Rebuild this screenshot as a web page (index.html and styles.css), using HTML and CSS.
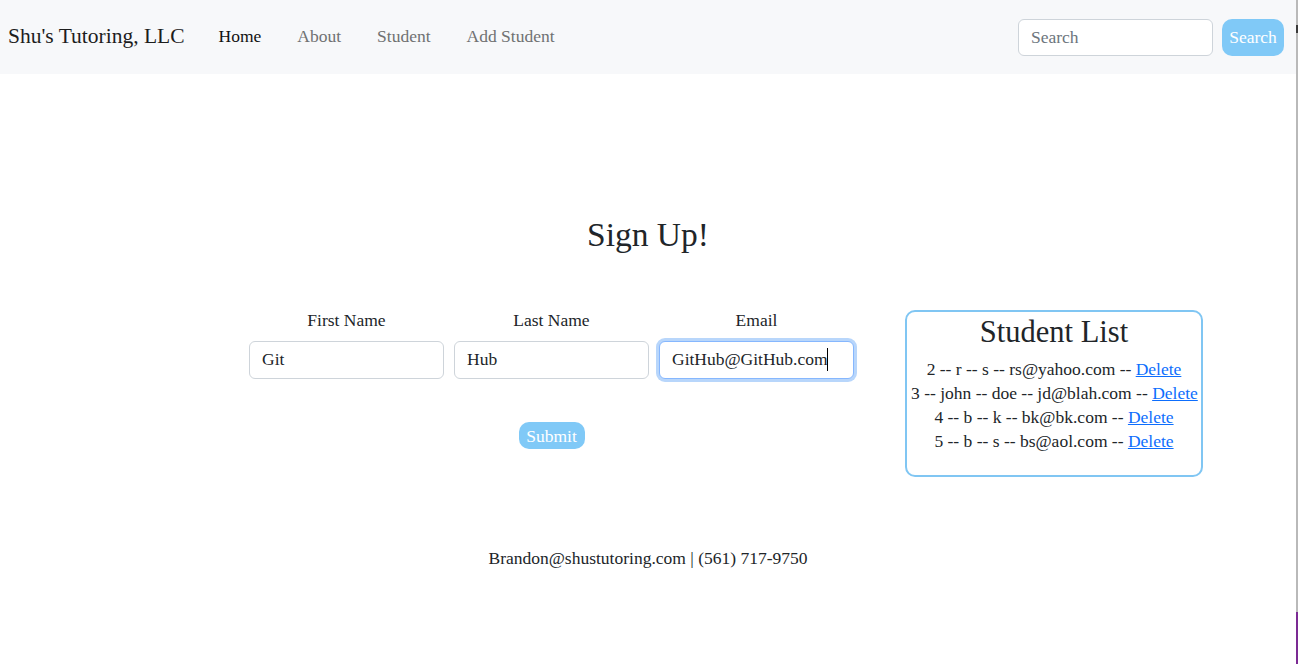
FILE: index.html
```html
<!DOCTYPE html>
<html lang="en">
<head>
<meta charset="utf-8">
<title>Shu's Tutoring, LLC</title>
<link rel="stylesheet" href="styles.css">
</head>
<body>
<div class="page">
  <nav class="navbar">
    <span class="brand">Shu's Tutoring, LLC</span>
    <ul class="nav-links">
      <li><a class="nav-link active" href="#">Home</a></li>
      <li><a class="nav-link" href="#">About</a></li>
      <li><a class="nav-link" href="#">Student</a></li>
      <li><a class="nav-link" href="#">Add Student</a></li>
    </ul>
    <form class="search">
      <input class="search-input" type="text" placeholder="Search">
      <button class="btn" type="button">Search</button>
    </form>
  </nav>

  <main class="main">
    <h1 class="title">Sign Up!</h1>
    <div class="content">
      <form class="signup">
        <div class="fields">
          <div class="field">
            <label class="label">First Name</label>
            <input class="input" type="text" value="Git">
          </div>
          <div class="field">
            <label class="label">Last Name</label>
            <input class="input" type="text" value="Hub">
          </div>
          <div class="field">
            <label class="label">Email</label>
            <div class="input-wrap">
              <input class="input focused" type="text" value="GitHub@GitHub.com">
              <span class="caret"></span>
            </div>
          </div>
        </div>
        <button class="btn submit" type="button">Submit</button>
      </form>

      <section class="list">
        <h2 class="list-title">Student List</h2>
        <p class="row">2 -- r -- s -- rs@yahoo.com -- <a href="#">Delete</a></p>
        <p class="row">3 -- john -- doe -- jd@blah.com -- <a href="#">Delete</a></p>
        <p class="row">4 -- b -- k -- bk@bk.com -- <a href="#">Delete</a></p>
        <p class="row">5 -- b -- s -- bs@aol.com -- <a href="#">Delete</a></p>
      </section>
    </div>
    <footer class="footer">Brandon@shustutoring.com | (561) 717-9750</footer>
  </main>
</div>
<div class="edge"><span class="edge-dark"></span><span class="edge-purple"></span></div>
</body>
</html>
```

FILE: styles.css
```css
* { box-sizing: border-box; }

html, body { margin: 0; padding: 0; background: #fff; }

body {
  display: flex;
  height: 664px;
  overflow: hidden;
  font-family: "Liberation Serif", "Times New Roman", serif;
  font-size: 17.5px;
  line-height: 24px;
  color: #212529;
}

.page { width: 1296px; flex: none; }

.edge {
  width: 2px;
  flex: none;
  background: #b9b9b9;
  display: flex;
  flex-direction: column;
  justify-content: space-between;
}
.edge-dark { display: block; height: 8px; margin-top: 25px; background: #3a3a3a; }
.edge-purple { display: block; height: 52px; background: #7b2a93; }

/* Navbar */
.navbar {
  height: 74px;
  background: #f7f8fa;
  display: flex;
  align-items: center;
  padding: 0 12px 2px 8px;
}
.brand {
  font-size: 21.5px;
  color: #1d1d1d;
  margin-right: 16px;
  line-height: 30px;
}
.nav-links {
  list-style: none;
  display: flex;
  margin: 0;
  padding: 0;
}
.nav-link {
  display: block;
  padding: 0 18px;
  text-decoration: none;
  color: #707172;
}
.nav-link.active { color: #111; }

.search {
  margin-left: auto;
  display: flex;
  gap: 9px;
  align-items: center;
  margin-top: 2px;
}
.search-input {
  width: 195px;
  height: 37px;
  border: 1px solid #ced4da;
  border-radius: 6px;
  padding: 0 12px;
  font: inherit;
  color: #212529;
  background: #fff;
}
.search-input::placeholder { color: #6c757d; }

.btn {
  font: inherit;
  color: #fff;
  background: #80c9f7;
  border: none;
  border-radius: 10px;
  height: 37px;
  padding: 0 6px;
  width: 62px;
}

/* Main */
.main { display: flex; flex-direction: column; }

.title {
  margin: 141px 0 0;
  text-align: center;
  font-size: 33.5px;
  font-weight: normal;
  line-height: 40px;
  color: #212529;
}

.content {
  display: flex;
  align-items: flex-start;
  gap: 51px;
  padding-left: 249px;
  margin-top: 55px;
}

.signup {
  width: 605px;
  display: flex;
  flex-direction: column;
  align-items: center;
}
.fields {
  display: grid;
  grid-template-columns: 195px 195px 195px;
  column-gap: 10px;
  width: 100%;
  margin-top: -2px;
}
.field { display: flex; flex-direction: column; }
.label {
  text-align: center;
  margin-bottom: 9px;
}
.input {
  width: 100%;
  height: 38px;
  border: 1px solid #ced4da;
  border-radius: 6px;
  padding: 0 12px 1px;
  font: inherit;
  color: #212529;
  background: #fff;
}
.input.focused {
  border-color: #86b7fe;
  box-shadow: 0 0 0 3px #b8d6fb;
  outline: none;
}
.input-wrap { position: relative; }
.caret {
  position: absolute;
  left: 168px;
  top: 7px;
  width: 1px;
  height: 23px;
  background: #000;
}

.submit {
  margin-top: 43px;
  height: 27px;
  width: 66px;
  border-radius: 10px;
  padding: 0;
}

.list {
  width: 298px;
  border: 2px solid #80c6f3;
  border-radius: 10px;
  padding: 3px 4px 22px;
  text-align: center;
}
.list-title {
  margin: 0 0 8px;
  font-size: 30.5px;
  font-weight: normal;
  line-height: 34px;
  color: #212529;
}
.row { margin: 0; line-height: 24px; white-space: nowrap; }
.row a { color: #0d6efd; }

.footer {
  text-align: center;
  margin-top: 69px;
}
```
